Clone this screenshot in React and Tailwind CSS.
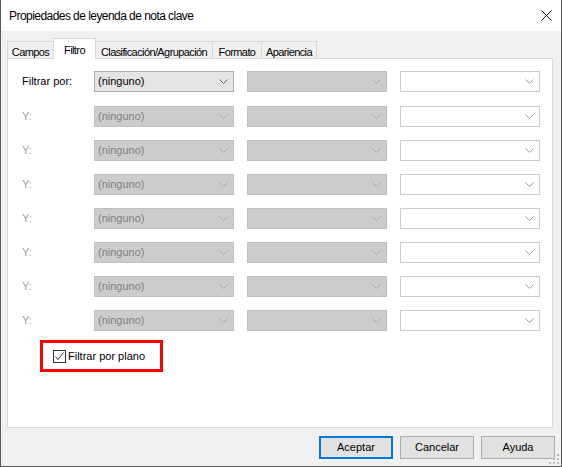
import React from "react";

const FONT = { fontFamily: '"Liberation Sans", Arial, sans-serif' };

function Chevron({ color }) {
  return (
    <svg width="9" height="5" viewBox="0 0 9 5" className="shrink-0">
      <path d="M0.5 0.5 L4.5 4.5 L8.5 0.5" fill="none" stroke={color} strokeWidth="1" />
    </svg>
  );
}

function Combo({ variant, text }) {
  const styles = {
    enabled: "bg-[#e5e5e5] border-[#adadad] text-black",
    disabled: "bg-[#cccccc] border-[#bfbfbf] text-[#838383]",
    blank: "bg-white border-[#cccccc] text-black",
  };
  const chev = variant === "enabled" ? "#606060" : variant === "disabled" ? "#a8a8a8" : "#9a9a9a";
  return (
    <div className={`w-[140px] h-[21px] border flex items-center pl-[3px] pr-[5px] ${styles[variant]}`}>
      <span className="flex-1 text-[11px] leading-none truncate">{text}</span>
      <Chevron color={chev} />
    </div>
  );
}

function Row({ label, first }) {
  return (
    <div className="flex items-center h-[21px]">
      <div className={`w-[72px] text-[11px] ${first ? "text-black" : "text-[#a0a0a0]"}`}>{label}</div>
      <div className="flex gap-[13px]">
        <Combo variant={first ? "enabled" : "disabled"} text="(ninguno)" />
        <Combo variant="disabled" text="" />
        <Combo variant="blank" text="" />
      </div>
    </div>
  );
}

function Tab({ label, w, selected, first }) {
  if (selected) {
    return (
      <div
        className={`relative z-10 h-[21px] mb-[-1px] ${first ? "" : "-ml-px"} bg-white border border-b-0 border-[#d9d9d9] flex justify-center pt-[3px] text-[11px] tracking-[-0.6px] whitespace-nowrap`}
        style={{ width: w }}
      >
        {label}
      </div>
    );
  }
  return (
    <div
      className={`h-[17px] ${first ? "" : "-ml-px"} bg-[#f0f0f0] border border-b-0 border-[#d9d9d9] flex justify-center pt-[2px] text-[11px] tracking-[-0.6px] whitespace-nowrap`}
      style={{ width: w }}
    >
      {label}
    </div>
  );
}

function Button({ label, primary }) {
  return (
    <div
      className={`w-[74px] h-[23px] bg-[#e1e1e1] flex items-center justify-center text-[11px] text-black ${
        primary ? "border-2 border-[#0078d7]" : "border border-[#adadad]"
      }`}
    >
      {label}
    </div>
  );
}

function SizeGrip() {
  const dots = [
    [8, 0],
    [4, 4],
    [8, 4],
    [0, 8],
    [4, 8],
    [8, 8],
  ];
  return (
    <svg width="10" height="10" viewBox="0 0 10 10" className="absolute right-[2px] bottom-[2px]">
      {dots.map(([x, y], i) => (
        <rect key={i} x={x} y={y} width="2" height="2" fill="#bcbcbc" />
      ))}
    </svg>
  );
}

export default function App() {
  const yRows = Array.from({ length: 7 });
  return (
    <div
      className="relative w-[562px] h-[467px] flex flex-col border-x border-b border-[#5a5a5a] bg-[#f0f0f0] text-black select-none"
      style={FONT}
    >
      {/* title bar */}
      <div className="h-[31px] bg-white flex items-center justify-between pl-[8px] pr-[9px] shrink-0">
        <span className="text-[12px] tracking-[-0.55px]">Propiedades de leyenda de nota clave</span>
        <svg width="11" height="11" viewBox="0 0 11 11">
          <path d="M0.5 0.5 L10.5 10.5 M10.5 0.5 L0.5 10.5" stroke="#111" strokeWidth="1" />
        </svg>
      </div>

      {/* tabs + page */}
      <div className="flex flex-col pl-[6px] pr-[8px] pt-[7px]">
        <div className="flex items-end">
          <Tab label="Campos" w={47} first />
          <Tab label="Filtro" w={43} selected />
          <Tab label="Clasificación/Agrupación" w={118} />
          <Tab label="Formato" w={50} />
          <Tab label="Apariencia" w={56} />
        </div>
        <div className="h-[370px] bg-white border border-[#d9d9d9] pl-[14px] pt-[12px]">
          <div className="flex flex-col">
            <div className="mb-[14px]">
              <Row label="Filtrar por:" first />
            </div>
            <div className="flex flex-col gap-[13px]">
              {yRows.map((_, i) => (
                <Row key={i} label="Y:" />
              ))}
            </div>
            <div className="mt-[9px] ml-[18px] w-[123px] h-[32px] border-[3px] border-[#ff0000] flex items-center pl-[10px]">
              <div className="w-[13px] h-[13px] border border-[#333333] bg-white flex items-center justify-center">
                <svg width="11" height="11" viewBox="0 0 11 11">
                  <path d="M1.5 5.5 L4 8.5 L9.5 1.5" fill="none" stroke="#333" strokeWidth="1" />
                </svg>
              </div>
              <span className="ml-[2px] text-[11px]">Filtrar por plano</span>
            </div>
          </div>
        </div>
      </div>

      {/* buttons */}
      <div className="flex justify-end gap-[7px] pr-[6px] pt-[8px]">
        <Button label="Aceptar" primary />
        <Button label="Cancelar" />
        <Button label="Ayuda" />
      </div>

      <SizeGrip />
    </div>
  );
}
